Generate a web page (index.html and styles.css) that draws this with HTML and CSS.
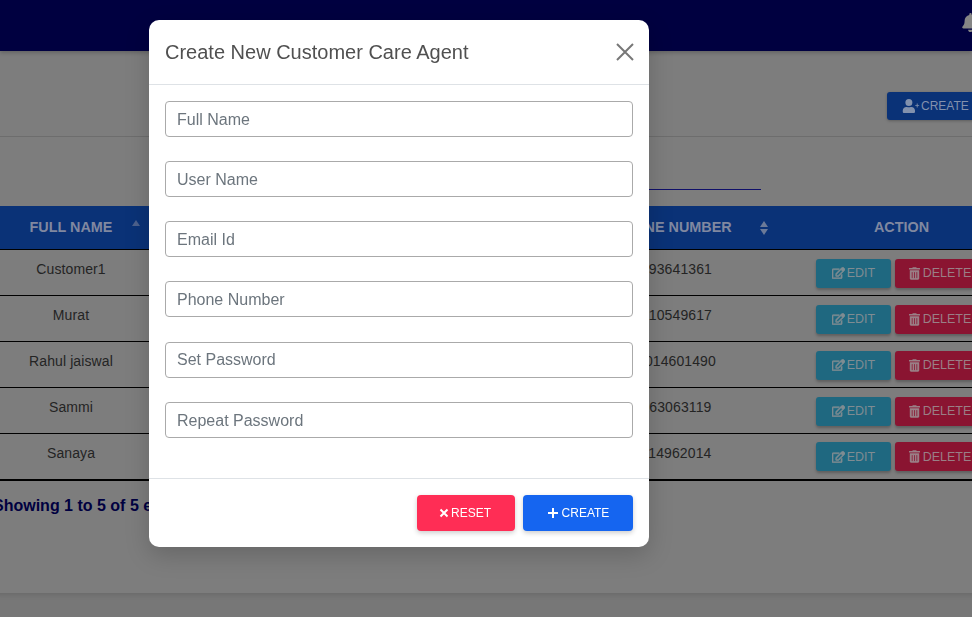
FILE: index.html
```html
<!DOCTYPE html>
<html lang="en">
<head>
    <meta charset="UTF-8">
    <meta name="viewport" content="width=device-width, initial-scale=1.0">
    <title>Customer Care Agents</title>
    <link rel="stylesheet" href="styles.css">
</head>
<body>
    <div class="page">
        <header class="topbar">
            <svg class="bell" viewBox="0 0 448 512"><path d="M224 512c35 0 64-29 64-64H160c0 35 29 64 64 64zm215-150c-19-21-56-52-56-154 0-78-54-140-127-155V32a32 32 0 0 0-64 0v21C119 68 65 130 65 208c0 102-37 133-56 154-6 6-9 14-9 22 0 16 13 32 32 32h384c19 0 32-16 32-32 0-8-3-16-9-22z"/></svg>
        </header>

        <main class="card">
            <div class="card-head">
                <button class="btn btn-top">
                    <svg class="ico-user" viewBox="0 0 640 512"><path d="M590 224h-46v-46c0-6-4-10-10-10h-12c-6 0-10 4-10 10v46h-46c-6 0-10 4-10 10v12c0 6 4 10 10 10h46v46c0 6 4 10 10 10h12c6 0 10-4 10-10v-46h46c6 0 10-4 10-10v-12c0-6-4-10-10-10zM224 256a128 128 0 1 0 0-256 128 128 0 0 0 0 256zm90 32h-17a174 174 0 0 1-146 0h-17C60 288 0 348 0 422v42c0 26 22 48 48 48h352c26 0 48-22 48-48v-42c0-74-60-134-134-134z"/></svg>
                    CREATE
                </button>
            </div>

            <div class="search-row">
                <input class="search" type="text">
            </div>

            <table class="agents">
                <colgroup>
                    <col class="c-name">
                    <col class="c-mid">
                    <col class="c-phone">
                    <col class="c-action">
                </colgroup>
                <thead>
                    <tr>
                        <th class="sort sort-asc">FULL NAME</th>
                        <th>USER NAME</th>
                        <th class="sort">PHONE NUMBER</th>
                        <th>ACTION</th>
                    </tr>
                </thead>
                <tbody>
                    <tr>
                        <td>Customer1</td>
                        <td>customer1</td>
                        <td>9193641361</td>
                        <td class="actions"><button class="btn btn-edit"><svg viewBox="0 0 576 512"><use href="#edit"/></svg>EDIT</button><button class="btn btn-del"><svg viewBox="0 0 448 512"><use href="#trash"/></svg>DELETE</button></td>
                    </tr>
                    <tr>
                        <td>Murat</td>
                        <td>murat</td>
                        <td>9810549617</td>
                        <td class="actions"><button class="btn btn-edit"><svg viewBox="0 0 576 512"><use href="#edit"/></svg>EDIT</button><button class="btn btn-del"><svg viewBox="0 0 448 512"><use href="#trash"/></svg>DELETE</button></td>
                    </tr>
                    <tr>
                        <td>Rahul jaiswal</td>
                        <td>rahul</td>
                        <td>91014601490</td>
                        <td class="actions"><button class="btn btn-edit"><svg viewBox="0 0 576 512"><use href="#edit"/></svg>EDIT</button><button class="btn btn-del"><svg viewBox="0 0 448 512"><use href="#trash"/></svg>DELETE</button></td>
                    </tr>
                    <tr>
                        <td>Sammi</td>
                        <td>sammi</td>
                        <td>9163063119</td>
                        <td class="actions"><button class="btn btn-edit"><svg viewBox="0 0 576 512"><use href="#edit"/></svg>EDIT</button><button class="btn btn-del"><svg viewBox="0 0 448 512"><use href="#trash"/></svg>DELETE</button></td>
                    </tr>
                    <tr>
                        <td>Sanaya</td>
                        <td>sanaya</td>
                        <td>9114962014</td>
                        <td class="actions"><button class="btn btn-edit"><svg viewBox="0 0 576 512"><use href="#edit"/></svg>EDIT</button><button class="btn btn-del"><svg viewBox="0 0 448 512"><use href="#trash"/></svg>DELETE</button></td>
                    </tr>
                </tbody>
            </table>

            <p class="info">Showing 1 to 5 of 5 entries</p>
        </main>
    </div>

    <!-- shared icons -->
    <svg class="defs" aria-hidden="true">
        <defs>
            <path id="edit" d="M403 345l32-32c5-5 14-1 14 6v145c0 26-22 48-48 48H48c-26 0-48-22-48-48V112c0-26 22-48 48-48h273c7 0 11 9 6 14l-32 32c-2 2-4 2-6 2H48v352h352V351c0-2 1-4 3-6zm157-202L297 406l-91 10c-26 3-49-19-46-46l10-91L433 16c23-23 60-23 83 0l44 44c23 23 23 60 0 83zm-99 31l-60-60-191 192-7 67 67-7 191-192z"/>
            <path id="trash" d="M32 464c0 26 22 48 48 48h288c26 0 48-22 48-48V128H32v336zm272-256a16 16 0 0 1 32 0v224a16 16 0 0 1-32 0V208zm-96 0a16 16 0 0 1 32 0v224a16 16 0 0 1-32 0V208zm-96 0a16 16 0 0 1 32 0v224a16 16 0 0 1-32 0V208zM432 32H312l-9-19c-4-8-12-13-21-13H166c-9 0-17 5-21 13l-9 19H16C7 32 0 39 0 48v32c0 9 7 16 16 16h416c9 0 16-7 16-16V48c0-9-7-16-16-16z"/>
        </defs>
    </svg>

    <div class="modal-wrap">
        <div class="modal">
            <div class="modal-head">
                <h2>Create New Customer Care Agent</h2>
                <svg class="close" viewBox="0 0 18 18"><path d="M1 1l16 16M17 1L1 17"/></svg>
            </div>
            <form class="modal-body">
                <input type="text" placeholder="Full Name">
                <input type="text" placeholder="User Name">
                <input type="text" placeholder="Email Id">
                <input type="text" placeholder="Phone Number">
                <input type="text" placeholder="Set Password">
                <input type="text" placeholder="Repeat Password">
            </form>
            <div class="modal-foot">
                <button class="btn btn-reset"><svg viewBox="0 0 10 10"><path d="M1.5 1.5l7 7M8.5 1.5l-7 7"/></svg>RESET</button>
                <button class="btn btn-create"><svg viewBox="0 0 12 12"><path d="M6 1v10M1 6h10"/></svg>CREATE</button>
            </div>
        </div>
    </div>
</body>
</html>
```

FILE: styles.css
```css
* {
    box-sizing: border-box;
}

html, body {
    height: 100%;
}

body {
    margin: 0;
    overflow: hidden;
    background-color: #777;
    font-family: "Liberation Sans", Arial, sans-serif;
}

/* page behind the dialog, colours are already the dimmed ones */
.page {
    height: 617px;
    overflow: hidden;
}

.topbar {
    height: 51px;
    background-color: #000040;
    display: flex;
    justify-content: flex-end;
    align-items: flex-start;
    box-shadow: 0 2px 4px rgba(0, 0, 0, .2);
    position: relative;
}

.bell {
    width: 17px;
    height: 19px;
    margin: 13px -7px 0 0;
    fill: #858585;
}

.card {
    width: 1033px;
    height: 542px;
    margin-left: -5px;
    background-color: #7d7d7d;
    box-shadow: 0 1px 6px rgba(0, 0, 0, .15);
}

.card-head {
    height: 86px;
    padding: 41px 0 0 892px;
    border-bottom: 1px solid #6d6d6d;
}

.btn {
    border: 0;
    border-radius: 3px;
    font-family: inherit;
    font-size: 12px;
    display: inline-flex;
    align-items: center;
    justify-content: center;
    padding: 0;
}

.btn svg {
    fill: currentColor;
}

.btn-top {
    width: 110px;
    height: 28px;
    justify-content: flex-start;
    padding-left: 15px;
    background-color: #0a3277;
    color: #8291ad;
    box-shadow: 0 1px 3px rgba(0, 0, 0, .25);
}

.ico-user {
    width: 19px;
    height: 14px;
    margin-right: 0;
}

.search-row {
    height: 69px;
    display: flex;
    justify-content: flex-end;
    padding: 36px 267px 0 0;
}

.search {
    width: 200px;
    height: 17px;
    border: 0;
    border-bottom: 1px solid #10106a;
    background: transparent;
}

.agents {
    width: 1033px;
    table-layout: fixed;
    border-collapse: collapse;
    font-size: 14px;
    color: #242424;
    border-bottom: 2px solid #000;
}

.c-name { width: 152px; }
.c-mid { width: 423px; }
.c-phone { width: 205px; }
.c-action { width: 253px; }

.agents th {
    height: 43px;
    background-color: #0a3277;
    color: #8088a0;
    font-size: 14.4px;
    font-weight: bold;
    border-bottom: 1px solid #000;
    position: relative;
    padding: 0;
    text-align: center;
}

.agents td {
    height: 46px;
    text-align: center;
    padding: 0 0 6px;
    border-bottom: 1px solid #000;
    letter-spacing: .1px;
}

.agents td.actions {
    padding: 2px 2px 0 0;
    white-space: nowrap;
}

.agents tbody tr:last-child td {
    height: 47px;
    padding-bottom: 7px;
}

.agents tbody tr:last-child td.actions {
    padding: 2px 2px 1px 0;
}

/* sort arrows in header */
.sort::before,
.sort::after {
    content: "";
    position: absolute;
    right: 7px;
    border-left: 4px solid transparent;
    border-right: 4px solid transparent;
}

.sort::before {
    top: 15px;
    border-bottom: 6px solid #6b7a98;
}

.sort::after {
    top: 23px;
    border-top: 6px solid #6b7a98;
}

.sort-asc::after {
    display: none;
}

.sort-asc::before {
    top: 14px;
    border-bottom-color: #4d618c;
}

.btn-edit, .btn-del {
    height: 29px;
    font-size: 12.5px;
    box-shadow: 0 2px 3px rgba(0, 0, 0, .25);
    vertical-align: middle;
    color: #7f8c92;
}

.btn-edit {
    width: 75px;
    background-color: #1f6880;
    margin-right: 4px;
}

.btn-del {
    width: 90px;
    background-color: #8a1431;
    color: #9a7f86;
}

.btn-edit svg {
    width: 13px;
    height: 12px;
    margin-right: 2px;
    stroke: currentColor;
    stroke-width: 24;
}

.btn-del svg {
    width: 11px;
    height: 13px;
    margin-right: 3px;
}

.info {
    margin: 16px 0 0 -2px;
    font-size: 16px;
    font-weight: bold;
    color: #000040;
}

.defs {
    position: absolute;
    width: 0;
    height: 0;
}

/* dialog */
.modal-wrap {
    position: fixed;
    top: 0;
    left: 0;
    right: 0;
    bottom: 0;
    padding: 20px 0 0 149px;
}

.modal {
    width: 500px;
    height: 527px;
    background-color: #fff;
    border-radius: 10px;
    box-shadow: 0 8px 24px rgba(0, 0, 0, .18);
}

.modal-head {
    height: 65px;
    padding: 0 15px 0 16px;
    display: flex;
    justify-content: space-between;
    align-items: center;
    border-bottom: 1px solid #dee2e6;
}

.modal-head h2 {
    margin: 0;
    font-size: 20px;
    font-weight: normal;
    color: #505050;
}

.close {
    width: 18px;
    height: 18px;
    fill: none;
    stroke: #777;
    stroke-width: 2;
}

.modal-body {
    padding: 15.8px 16px 0;
    display: flex;
    flex-direction: column;
    gap: 24.2px;
    height: 394px;
    border-bottom: 1px solid #dee2e6;
}

.modal-body input {
    height: 36px;
    padding: 1.8px 11px 0;
    border: 1px solid #aaa;
    border-radius: 4px;
    font-family: inherit;
    font-size: 16px;
    flex: none;
}

.modal-body input::placeholder {
    color: #6c757d;
    opacity: 1;
}

.modal-foot {
    display: flex;
    justify-content: flex-end;
    gap: 8px;
    padding: 16px 16px 0;
}

.modal-foot .btn {
    height: 36px;
    color: #fff;
    box-shadow: 0 2px 5px rgba(0, 0, 0, .2);
    border-radius: 4px;
}

.modal-foot svg {
    fill: none;
    stroke: #fff;
}

.btn-reset {
    width: 98px;
    padding-right: 2px;
    background-color: #ff2d55;
}

.btn-reset svg {
    width: 10px;
    height: 10px;
    stroke-width: 2;
    margin-right: 2px;
}

.btn-create {
    width: 110px;
    background-color: #1565f0;
}

.btn-create svg {
    width: 12px;
    height: 12px;
    stroke-width: 2;
    margin-right: 3px;
}
```
